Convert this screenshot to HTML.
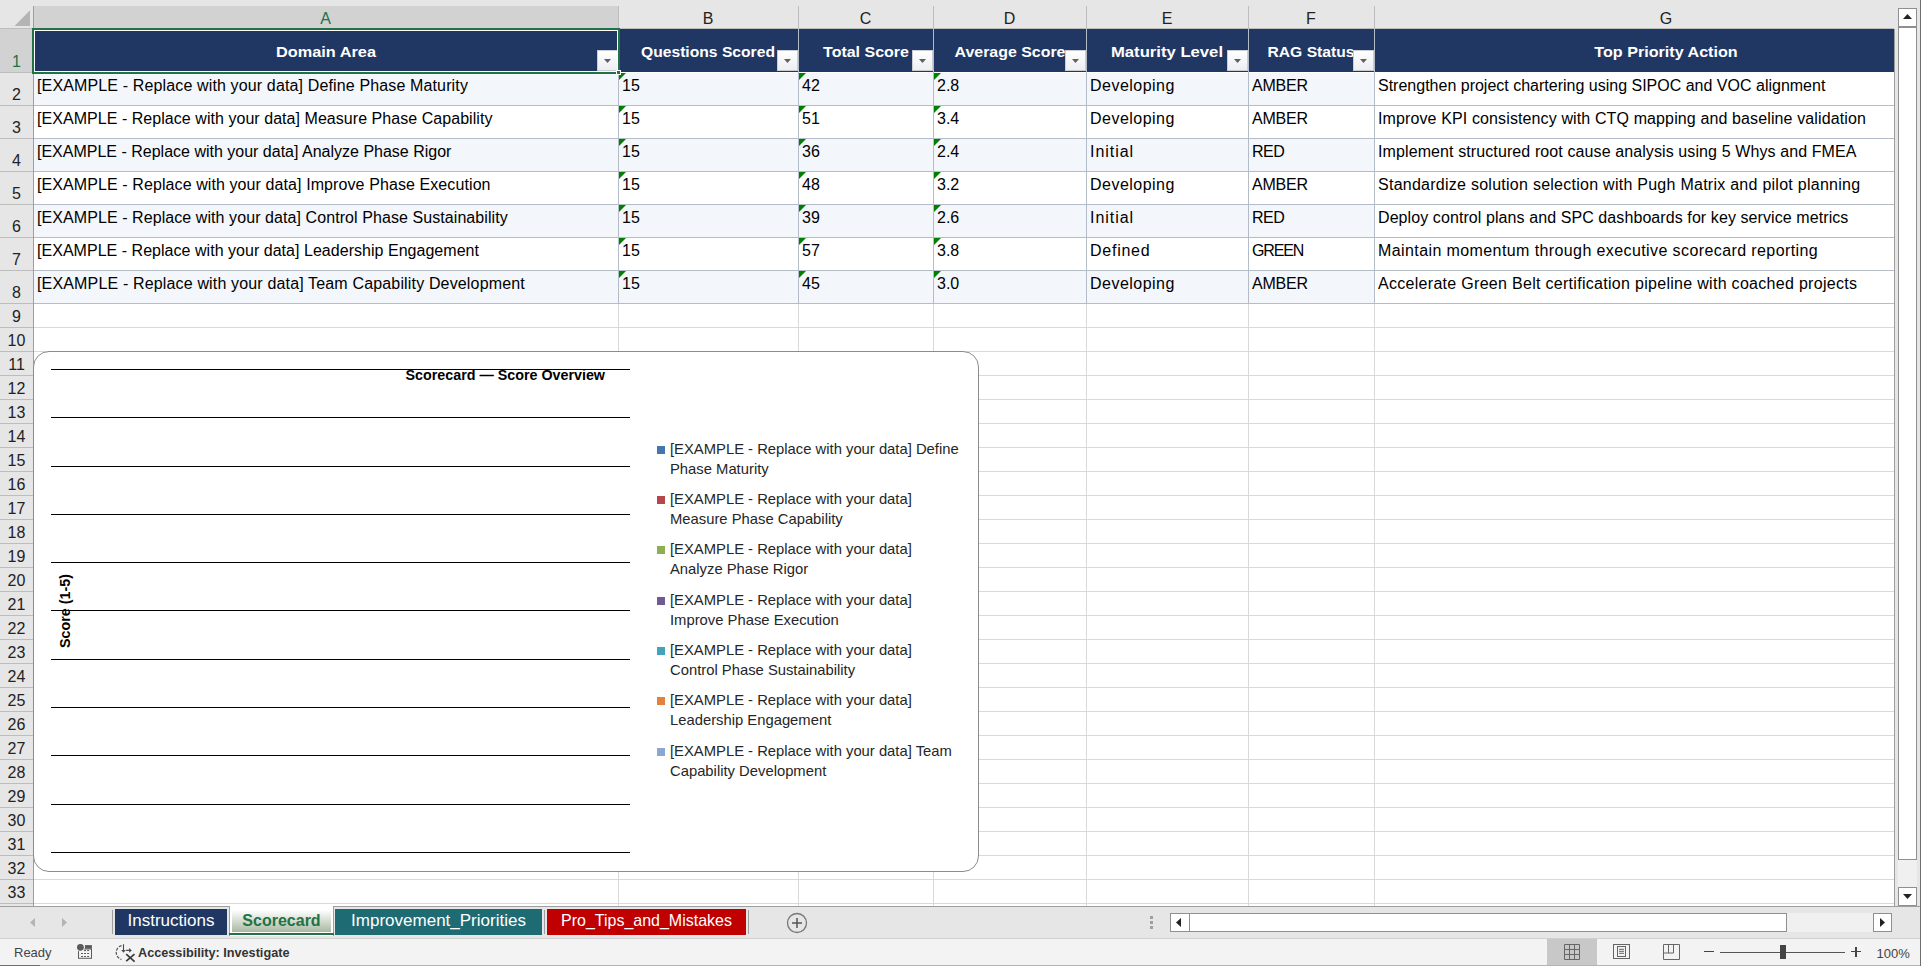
<!DOCTYPE html><html><head><meta charset="utf-8"><style>
*{box-sizing:border-box}
html,body{margin:0;padding:0}
body{width:1921px;height:966px;overflow:hidden;position:relative;background:#fff;font-family:"Liberation Sans",sans-serif}
.a{position:absolute}
.t{position:absolute;white-space:nowrap;line-height:20px}

</style></head><body>
<div class="a" style="left:0;top:0;width:1921px;height:29px;background:#e6e6e6"></div>
<div class="a" style="left:0;top:0;width:33px;height:906px;background:#e6e6e6"></div>
<svg class="a" style="left:0;top:0" width="33" height="29"><polygon points="14.5,26 30,26 30,10.3" fill="#b4b4b4"/></svg>
<div class="a" style="left:34px;top:6px;width:584px;height:23px;background:#d2d2d2"></div>
<div class="a" style="left:618px;top:6px;width:1px;height:23px;background:#bdbdbd"></div>
<div class="a" style="left:798px;top:6px;width:1px;height:23px;background:#bdbdbd"></div>
<div class="a" style="left:933px;top:6px;width:1px;height:23px;background:#bdbdbd"></div>
<div class="a" style="left:1086px;top:6px;width:1px;height:23px;background:#bdbdbd"></div>
<div class="a" style="left:1248px;top:6px;width:1px;height:23px;background:#bdbdbd"></div>
<div class="a" style="left:1374px;top:6px;width:1px;height:23px;background:#bdbdbd"></div>
<div class="a" style="left:33px;top:6px;width:1px;height:23px;background:#bdbdbd"></div>
<div class="a" style="left:0;top:28px;width:1894px;height:1px;background:#bdbdbd"></div>
<div class="t" style="left:295.5px;top:8.6px;width:60px;text-align:center;font-size:16px;color:#217346">A</div>
<div class="t" style="left:678.0px;top:8.6px;width:60px;text-align:center;font-size:16px;color:#222">B</div>
<div class="t" style="left:835.5px;top:8.6px;width:60px;text-align:center;font-size:16px;color:#222">C</div>
<div class="t" style="left:979.5px;top:8.6px;width:60px;text-align:center;font-size:16px;color:#222">D</div>
<div class="t" style="left:1137.0px;top:8.6px;width:60px;text-align:center;font-size:16px;color:#222">E</div>
<div class="t" style="left:1281.0px;top:8.6px;width:60px;text-align:center;font-size:16px;color:#222">F</div>
<div class="t" style="left:1636px;top:8.6px;width:60px;text-align:center;font-size:16px;color:#222">G</div>
<div class="a" style="left:0;top:29px;width:33px;height:43px;background:#d2d2d2"></div>
<div class="a" style="left:33px;top:6px;width:1px;height:900px;background:#9e9e9e"></div>
<div class="a" style="left:0;top:72px;width:33px;height:1px;background:#bdbdbd"></div>
<div class="t" style="left:0;top:52px;width:33px;text-align:center;font-size:16px;color:#217346">1</div>
<div class="a" style="left:0;top:105px;width:33px;height:1px;background:#bdbdbd"></div>
<div class="t" style="left:0;top:85px;width:33px;text-align:center;font-size:16px;color:#222">2</div>
<div class="a" style="left:0;top:138px;width:33px;height:1px;background:#bdbdbd"></div>
<div class="t" style="left:0;top:118px;width:33px;text-align:center;font-size:16px;color:#222">3</div>
<div class="a" style="left:0;top:171px;width:33px;height:1px;background:#bdbdbd"></div>
<div class="t" style="left:0;top:151px;width:33px;text-align:center;font-size:16px;color:#222">4</div>
<div class="a" style="left:0;top:204px;width:33px;height:1px;background:#bdbdbd"></div>
<div class="t" style="left:0;top:184px;width:33px;text-align:center;font-size:16px;color:#222">5</div>
<div class="a" style="left:0;top:237px;width:33px;height:1px;background:#bdbdbd"></div>
<div class="t" style="left:0;top:217px;width:33px;text-align:center;font-size:16px;color:#222">6</div>
<div class="a" style="left:0;top:270px;width:33px;height:1px;background:#bdbdbd"></div>
<div class="t" style="left:0;top:250px;width:33px;text-align:center;font-size:16px;color:#222">7</div>
<div class="a" style="left:0;top:303px;width:33px;height:1px;background:#bdbdbd"></div>
<div class="t" style="left:0;top:283px;width:33px;text-align:center;font-size:16px;color:#222">8</div>
<div class="a" style="left:0;top:327px;width:33px;height:1px;background:#bdbdbd"></div>
<div class="t" style="left:0;top:307px;width:33px;text-align:center;font-size:16px;color:#222">9</div>
<div class="a" style="left:0;top:351px;width:33px;height:1px;background:#bdbdbd"></div>
<div class="t" style="left:0;top:331px;width:33px;text-align:center;font-size:16px;color:#222">10</div>
<div class="a" style="left:0;top:375px;width:33px;height:1px;background:#bdbdbd"></div>
<div class="t" style="left:0;top:355px;width:33px;text-align:center;font-size:16px;color:#222">11</div>
<div class="a" style="left:0;top:399px;width:33px;height:1px;background:#bdbdbd"></div>
<div class="t" style="left:0;top:379px;width:33px;text-align:center;font-size:16px;color:#222">12</div>
<div class="a" style="left:0;top:423px;width:33px;height:1px;background:#bdbdbd"></div>
<div class="t" style="left:0;top:403px;width:33px;text-align:center;font-size:16px;color:#222">13</div>
<div class="a" style="left:0;top:447px;width:33px;height:1px;background:#bdbdbd"></div>
<div class="t" style="left:0;top:427px;width:33px;text-align:center;font-size:16px;color:#222">14</div>
<div class="a" style="left:0;top:471px;width:33px;height:1px;background:#bdbdbd"></div>
<div class="t" style="left:0;top:451px;width:33px;text-align:center;font-size:16px;color:#222">15</div>
<div class="a" style="left:0;top:495px;width:33px;height:1px;background:#bdbdbd"></div>
<div class="t" style="left:0;top:475px;width:33px;text-align:center;font-size:16px;color:#222">16</div>
<div class="a" style="left:0;top:519px;width:33px;height:1px;background:#bdbdbd"></div>
<div class="t" style="left:0;top:499px;width:33px;text-align:center;font-size:16px;color:#222">17</div>
<div class="a" style="left:0;top:543px;width:33px;height:1px;background:#bdbdbd"></div>
<div class="t" style="left:0;top:523px;width:33px;text-align:center;font-size:16px;color:#222">18</div>
<div class="a" style="left:0;top:567px;width:33px;height:1px;background:#bdbdbd"></div>
<div class="t" style="left:0;top:547px;width:33px;text-align:center;font-size:16px;color:#222">19</div>
<div class="a" style="left:0;top:591px;width:33px;height:1px;background:#bdbdbd"></div>
<div class="t" style="left:0;top:571px;width:33px;text-align:center;font-size:16px;color:#222">20</div>
<div class="a" style="left:0;top:615px;width:33px;height:1px;background:#bdbdbd"></div>
<div class="t" style="left:0;top:595px;width:33px;text-align:center;font-size:16px;color:#222">21</div>
<div class="a" style="left:0;top:639px;width:33px;height:1px;background:#bdbdbd"></div>
<div class="t" style="left:0;top:619px;width:33px;text-align:center;font-size:16px;color:#222">22</div>
<div class="a" style="left:0;top:663px;width:33px;height:1px;background:#bdbdbd"></div>
<div class="t" style="left:0;top:643px;width:33px;text-align:center;font-size:16px;color:#222">23</div>
<div class="a" style="left:0;top:687px;width:33px;height:1px;background:#bdbdbd"></div>
<div class="t" style="left:0;top:667px;width:33px;text-align:center;font-size:16px;color:#222">24</div>
<div class="a" style="left:0;top:711px;width:33px;height:1px;background:#bdbdbd"></div>
<div class="t" style="left:0;top:691px;width:33px;text-align:center;font-size:16px;color:#222">25</div>
<div class="a" style="left:0;top:735px;width:33px;height:1px;background:#bdbdbd"></div>
<div class="t" style="left:0;top:715px;width:33px;text-align:center;font-size:16px;color:#222">26</div>
<div class="a" style="left:0;top:759px;width:33px;height:1px;background:#bdbdbd"></div>
<div class="t" style="left:0;top:739px;width:33px;text-align:center;font-size:16px;color:#222">27</div>
<div class="a" style="left:0;top:783px;width:33px;height:1px;background:#bdbdbd"></div>
<div class="t" style="left:0;top:763px;width:33px;text-align:center;font-size:16px;color:#222">28</div>
<div class="a" style="left:0;top:807px;width:33px;height:1px;background:#bdbdbd"></div>
<div class="t" style="left:0;top:787px;width:33px;text-align:center;font-size:16px;color:#222">29</div>
<div class="a" style="left:0;top:831px;width:33px;height:1px;background:#bdbdbd"></div>
<div class="t" style="left:0;top:811px;width:33px;text-align:center;font-size:16px;color:#222">30</div>
<div class="a" style="left:0;top:855px;width:33px;height:1px;background:#bdbdbd"></div>
<div class="t" style="left:0;top:835px;width:33px;text-align:center;font-size:16px;color:#222">31</div>
<div class="a" style="left:0;top:879px;width:33px;height:1px;background:#bdbdbd"></div>
<div class="t" style="left:0;top:859px;width:33px;text-align:center;font-size:16px;color:#222">32</div>
<div class="a" style="left:0;top:903px;width:33px;height:1px;background:#bdbdbd"></div>
<div class="t" style="left:0;top:883px;width:33px;text-align:center;font-size:16px;color:#222">33</div>
<div class="a" style="left:34px;top:327px;width:1860px;height:1px;background:#d9d9d9"></div>
<div class="a" style="left:34px;top:351px;width:1860px;height:1px;background:#d9d9d9"></div>
<div class="a" style="left:34px;top:375px;width:1860px;height:1px;background:#d9d9d9"></div>
<div class="a" style="left:34px;top:399px;width:1860px;height:1px;background:#d9d9d9"></div>
<div class="a" style="left:34px;top:423px;width:1860px;height:1px;background:#d9d9d9"></div>
<div class="a" style="left:34px;top:447px;width:1860px;height:1px;background:#d9d9d9"></div>
<div class="a" style="left:34px;top:471px;width:1860px;height:1px;background:#d9d9d9"></div>
<div class="a" style="left:34px;top:495px;width:1860px;height:1px;background:#d9d9d9"></div>
<div class="a" style="left:34px;top:519px;width:1860px;height:1px;background:#d9d9d9"></div>
<div class="a" style="left:34px;top:543px;width:1860px;height:1px;background:#d9d9d9"></div>
<div class="a" style="left:34px;top:567px;width:1860px;height:1px;background:#d9d9d9"></div>
<div class="a" style="left:34px;top:591px;width:1860px;height:1px;background:#d9d9d9"></div>
<div class="a" style="left:34px;top:615px;width:1860px;height:1px;background:#d9d9d9"></div>
<div class="a" style="left:34px;top:639px;width:1860px;height:1px;background:#d9d9d9"></div>
<div class="a" style="left:34px;top:663px;width:1860px;height:1px;background:#d9d9d9"></div>
<div class="a" style="left:34px;top:687px;width:1860px;height:1px;background:#d9d9d9"></div>
<div class="a" style="left:34px;top:711px;width:1860px;height:1px;background:#d9d9d9"></div>
<div class="a" style="left:34px;top:735px;width:1860px;height:1px;background:#d9d9d9"></div>
<div class="a" style="left:34px;top:759px;width:1860px;height:1px;background:#d9d9d9"></div>
<div class="a" style="left:34px;top:783px;width:1860px;height:1px;background:#d9d9d9"></div>
<div class="a" style="left:34px;top:807px;width:1860px;height:1px;background:#d9d9d9"></div>
<div class="a" style="left:34px;top:831px;width:1860px;height:1px;background:#d9d9d9"></div>
<div class="a" style="left:34px;top:855px;width:1860px;height:1px;background:#d9d9d9"></div>
<div class="a" style="left:34px;top:879px;width:1860px;height:1px;background:#d9d9d9"></div>
<div class="a" style="left:34px;top:903px;width:1860px;height:1px;background:#d9d9d9"></div>
<div class="a" style="left:618px;top:303px;width:1px;height:603px;background:#d9d9d9"></div>
<div class="a" style="left:798px;top:303px;width:1px;height:603px;background:#d9d9d9"></div>
<div class="a" style="left:933px;top:303px;width:1px;height:603px;background:#d9d9d9"></div>
<div class="a" style="left:1086px;top:303px;width:1px;height:603px;background:#d9d9d9"></div>
<div class="a" style="left:1248px;top:303px;width:1px;height:603px;background:#d9d9d9"></div>
<div class="a" style="left:1374px;top:303px;width:1px;height:603px;background:#d9d9d9"></div>
<div class="a" style="left:1894px;top:303px;width:1px;height:603px;background:#d9d9d9"></div>
<div class="a" style="left:34px;top:29px;width:1860px;height:43px;background:#203764"></div>
<div class="t" style="left:175.5px;top:41.5px;width:300px;text-align:center;font-size:15.5px;font-weight:bold;color:#fff;transform:scaleX(1.052)">Domain Area</div>
<div class="a" style="left:597px;top:50px;width:21px;height:21px;border:1px solid #c9ccd2;background:linear-gradient(#fff,#eceef2)"></div>
<svg class="a" style="left:604px;top:59px" width="7" height="4"><polygon points="0,0 7,0 3.5,4" fill="#606060"/></svg>
<div class="t" style="left:558.0px;top:41.5px;width:300px;text-align:center;font-size:15.5px;font-weight:bold;color:#fff;transform:scaleX(1.01)">Questions Scored</div>
<div class="a" style="left:777px;top:50px;width:21px;height:21px;border:1px solid #c9ccd2;background:linear-gradient(#fff,#eceef2)"></div>
<svg class="a" style="left:784px;top:59px" width="7" height="4"><polygon points="0,0 7,0 3.5,4" fill="#606060"/></svg>
<div class="t" style="left:715.5px;top:41.5px;width:300px;text-align:center;font-size:15.5px;font-weight:bold;color:#fff;transform:scaleX(1.03)">Total Score</div>
<div class="a" style="left:912px;top:50px;width:21px;height:21px;border:1px solid #c9ccd2;background:linear-gradient(#fff,#eceef2)"></div>
<svg class="a" style="left:919px;top:59px" width="7" height="4"><polygon points="0,0 7,0 3.5,4" fill="#606060"/></svg>
<div class="t" style="left:859.5px;top:41.5px;width:300px;text-align:center;font-size:15.5px;font-weight:bold;color:#fff;transform:scaleX(1.027)">Average Score</div>
<div class="a" style="left:1065px;top:50px;width:21px;height:21px;border:1px solid #c9ccd2;background:linear-gradient(#fff,#eceef2)"></div>
<svg class="a" style="left:1072px;top:59px" width="7" height="4"><polygon points="0,0 7,0 3.5,4" fill="#606060"/></svg>
<div class="t" style="left:1017.0px;top:41.5px;width:300px;text-align:center;font-size:15.5px;font-weight:bold;color:#fff;transform:scaleX(1.075)">Maturity Level</div>
<div class="a" style="left:1227px;top:50px;width:21px;height:21px;border:1px solid #c9ccd2;background:linear-gradient(#fff,#eceef2)"></div>
<svg class="a" style="left:1234px;top:59px" width="7" height="4"><polygon points="0,0 7,0 3.5,4" fill="#606060"/></svg>
<div class="t" style="left:1161.0px;top:41.5px;width:300px;text-align:center;font-size:15.5px;font-weight:bold;color:#fff;transform:scaleX(1.01)">RAG Status</div>
<div class="a" style="left:1353px;top:50px;width:21px;height:21px;border:1px solid #c9ccd2;background:linear-gradient(#fff,#eceef2)"></div>
<svg class="a" style="left:1360px;top:59px" width="7" height="4"><polygon points="0,0 7,0 3.5,4" fill="#606060"/></svg>
<div class="t" style="left:1516px;top:41.5px;width:300px;text-align:center;font-size:15.5px;font-weight:bold;color:#fff;transform:scaleX(1.04)">Top Priority Action</div>
<div class="a" style="left:34px;top:73px;width:1340px;height:32px;background:#f3f6fb"></div>
<div class="a" style="left:34px;top:139px;width:1340px;height:32px;background:#f3f6fb"></div>
<div class="a" style="left:34px;top:205px;width:1340px;height:32px;background:#f3f6fb"></div>
<div class="a" style="left:34px;top:271px;width:1340px;height:32px;background:#f3f6fb"></div>
<div class="a" style="left:618px;top:29px;width:1px;height:274px;background:#b4bcc8"></div>
<div class="a" style="left:798px;top:29px;width:1px;height:274px;background:#b4bcc8"></div>
<div class="a" style="left:933px;top:29px;width:1px;height:274px;background:#b4bcc8"></div>
<div class="a" style="left:1086px;top:29px;width:1px;height:274px;background:#b4bcc8"></div>
<div class="a" style="left:1248px;top:29px;width:1px;height:274px;background:#b4bcc8"></div>
<div class="a" style="left:1374px;top:29px;width:1px;height:274px;background:#b4bcc8"></div>
<div class="a" style="left:1894px;top:29px;width:1px;height:877px;background:#9e9e9e"></div>
<div class="a" style="left:34px;top:105px;width:1860px;height:1px;background:#b4bcc8"></div>
<div class="t" style="left:37.0px;top:76.3px;font-size:16px;color:#000;letter-spacing:0.138px">[EXAMPLE - Replace with your data] Define Phase Maturity</div>
<div class="t" style="left:622.0px;top:76.3px;font-size:16px;color:#000">15</div>
<svg class="a" style="left:619px;top:73px" width="7" height="7"><polygon points="0,0 7,0 0,7" fill="#008000"/></svg>
<div class="t" style="left:802.0px;top:76.3px;font-size:16px;color:#000">42</div>
<svg class="a" style="left:799px;top:73px" width="7" height="7"><polygon points="0,0 7,0 0,7" fill="#008000"/></svg>
<div class="t" style="left:937.0px;top:76.3px;font-size:16px;color:#000">2.8</div>
<svg class="a" style="left:934px;top:73px" width="7" height="7"><polygon points="0,0 7,0 0,7" fill="#008000"/></svg>
<div class="t" style="left:1090.0px;top:76.3px;font-size:16px;color:#000;letter-spacing:0.478px">Developing</div>
<div class="t" style="left:1252.0px;top:76.3px;font-size:16px;color:#000;letter-spacing:-0.225px">AMBER</div>
<div class="t" style="left:1378.0px;top:76.3px;font-size:16px;color:#000">Strengthen project chartering using SIPOC and VOC alignment</div>
<div class="a" style="left:34px;top:138px;width:1860px;height:1px;background:#b4bcc8"></div>
<div class="t" style="left:37.0px;top:109.3px;font-size:16px;color:#000;letter-spacing:0.047px">[EXAMPLE - Replace with your data] Measure Phase Capability</div>
<div class="t" style="left:622.0px;top:109.3px;font-size:16px;color:#000">15</div>
<svg class="a" style="left:619px;top:106px" width="7" height="7"><polygon points="0,0 7,0 0,7" fill="#008000"/></svg>
<div class="t" style="left:802.0px;top:109.3px;font-size:16px;color:#000">51</div>
<svg class="a" style="left:799px;top:106px" width="7" height="7"><polygon points="0,0 7,0 0,7" fill="#008000"/></svg>
<div class="t" style="left:937.0px;top:109.3px;font-size:16px;color:#000">3.4</div>
<svg class="a" style="left:934px;top:106px" width="7" height="7"><polygon points="0,0 7,0 0,7" fill="#008000"/></svg>
<div class="t" style="left:1090.0px;top:109.3px;font-size:16px;color:#000;letter-spacing:0.478px">Developing</div>
<div class="t" style="left:1252.0px;top:109.3px;font-size:16px;color:#000;letter-spacing:-0.225px">AMBER</div>
<div class="t" style="left:1378.0px;top:109.3px;font-size:16px;color:#000;letter-spacing:0.121px">Improve KPI consistency with CTQ mapping and baseline validation</div>
<div class="a" style="left:34px;top:171px;width:1860px;height:1px;background:#b4bcc8"></div>
<div class="t" style="left:37.0px;top:142.3px;font-size:16px;color:#000">[EXAMPLE - Replace with your data] Analyze Phase Rigor</div>
<div class="t" style="left:622.0px;top:142.3px;font-size:16px;color:#000">15</div>
<svg class="a" style="left:619px;top:139px" width="7" height="7"><polygon points="0,0 7,0 0,7" fill="#008000"/></svg>
<div class="t" style="left:802.0px;top:142.3px;font-size:16px;color:#000">36</div>
<svg class="a" style="left:799px;top:139px" width="7" height="7"><polygon points="0,0 7,0 0,7" fill="#008000"/></svg>
<div class="t" style="left:937.0px;top:142.3px;font-size:16px;color:#000">2.4</div>
<svg class="a" style="left:934px;top:139px" width="7" height="7"><polygon points="0,0 7,0 0,7" fill="#008000"/></svg>
<div class="t" style="left:1090.0px;top:142.3px;font-size:16px;color:#000;letter-spacing:0.967px">Initial</div>
<div class="t" style="left:1252.0px;top:142.3px;font-size:16px;color:#000;letter-spacing:-0.500px">RED</div>
<div class="t" style="left:1378.0px;top:142.3px;font-size:16px;color:#000;letter-spacing:0.103px">Implement structured root cause analysis using 5 Whys and FMEA</div>
<div class="a" style="left:34px;top:204px;width:1860px;height:1px;background:#b4bcc8"></div>
<div class="t" style="left:37.0px;top:175.3px;font-size:16px;color:#000;letter-spacing:0.093px">[EXAMPLE - Replace with your data] Improve Phase Execution</div>
<div class="t" style="left:622.0px;top:175.3px;font-size:16px;color:#000">15</div>
<svg class="a" style="left:619px;top:172px" width="7" height="7"><polygon points="0,0 7,0 0,7" fill="#008000"/></svg>
<div class="t" style="left:802.0px;top:175.3px;font-size:16px;color:#000">48</div>
<svg class="a" style="left:799px;top:172px" width="7" height="7"><polygon points="0,0 7,0 0,7" fill="#008000"/></svg>
<div class="t" style="left:937.0px;top:175.3px;font-size:16px;color:#000">3.2</div>
<svg class="a" style="left:934px;top:172px" width="7" height="7"><polygon points="0,0 7,0 0,7" fill="#008000"/></svg>
<div class="t" style="left:1090.0px;top:175.3px;font-size:16px;color:#000;letter-spacing:0.478px">Developing</div>
<div class="t" style="left:1252.0px;top:175.3px;font-size:16px;color:#000;letter-spacing:-0.225px">AMBER</div>
<div class="t" style="left:1378.0px;top:175.3px;font-size:16px;color:#000;letter-spacing:0.260px">Standardize solution selection with Pugh Matrix and pilot planning</div>
<div class="a" style="left:34px;top:237px;width:1860px;height:1px;background:#b4bcc8"></div>
<div class="t" style="left:37.0px;top:208.3px;font-size:16px;color:#000;letter-spacing:0.076px">[EXAMPLE - Replace with your data] Control Phase Sustainability</div>
<div class="t" style="left:622.0px;top:208.3px;font-size:16px;color:#000">15</div>
<svg class="a" style="left:619px;top:205px" width="7" height="7"><polygon points="0,0 7,0 0,7" fill="#008000"/></svg>
<div class="t" style="left:802.0px;top:208.3px;font-size:16px;color:#000">39</div>
<svg class="a" style="left:799px;top:205px" width="7" height="7"><polygon points="0,0 7,0 0,7" fill="#008000"/></svg>
<div class="t" style="left:937.0px;top:208.3px;font-size:16px;color:#000">2.6</div>
<svg class="a" style="left:934px;top:205px" width="7" height="7"><polygon points="0,0 7,0 0,7" fill="#008000"/></svg>
<div class="t" style="left:1090.0px;top:208.3px;font-size:16px;color:#000;letter-spacing:0.967px">Initial</div>
<div class="t" style="left:1252.0px;top:208.3px;font-size:16px;color:#000;letter-spacing:-0.500px">RED</div>
<div class="t" style="left:1378.0px;top:208.3px;font-size:16px;color:#000;letter-spacing:0.085px">Deploy control plans and SPC dashboards for key service metrics</div>
<div class="a" style="left:34px;top:270px;width:1860px;height:1px;background:#b4bcc8"></div>
<div class="t" style="left:37.0px;top:241.3px;font-size:16px;color:#000;letter-spacing:0.031px">[EXAMPLE - Replace with your data] Leadership Engagement</div>
<div class="t" style="left:622.0px;top:241.3px;font-size:16px;color:#000">15</div>
<svg class="a" style="left:619px;top:238px" width="7" height="7"><polygon points="0,0 7,0 0,7" fill="#008000"/></svg>
<div class="t" style="left:802.0px;top:241.3px;font-size:16px;color:#000">57</div>
<svg class="a" style="left:799px;top:238px" width="7" height="7"><polygon points="0,0 7,0 0,7" fill="#008000"/></svg>
<div class="t" style="left:937.0px;top:241.3px;font-size:16px;color:#000">3.8</div>
<svg class="a" style="left:934px;top:238px" width="7" height="7"><polygon points="0,0 7,0 0,7" fill="#008000"/></svg>
<div class="t" style="left:1090.0px;top:241.3px;font-size:16px;color:#000;letter-spacing:0.750px">Defined</div>
<div class="t" style="left:1252.0px;top:241.3px;font-size:16px;color:#000;letter-spacing:-1.125px">GREEN</div>
<div class="t" style="left:1378.0px;top:241.3px;font-size:16px;color:#000;letter-spacing:0.402px">Maintain momentum through executive scorecard reporting</div>
<div class="a" style="left:34px;top:303px;width:1860px;height:1px;background:#b4bcc8"></div>
<div class="t" style="left:37.0px;top:274.3px;font-size:16px;color:#000;letter-spacing:0.157px">[EXAMPLE - Replace with your data] Team Capability Development</div>
<div class="t" style="left:622.0px;top:274.3px;font-size:16px;color:#000">15</div>
<svg class="a" style="left:619px;top:271px" width="7" height="7"><polygon points="0,0 7,0 0,7" fill="#008000"/></svg>
<div class="t" style="left:802.0px;top:274.3px;font-size:16px;color:#000">45</div>
<svg class="a" style="left:799px;top:271px" width="7" height="7"><polygon points="0,0 7,0 0,7" fill="#008000"/></svg>
<div class="t" style="left:937.0px;top:274.3px;font-size:16px;color:#000">3.0</div>
<svg class="a" style="left:934px;top:271px" width="7" height="7"><polygon points="0,0 7,0 0,7" fill="#008000"/></svg>
<div class="t" style="left:1090.0px;top:274.3px;font-size:16px;color:#000;letter-spacing:0.478px">Developing</div>
<div class="t" style="left:1252.0px;top:274.3px;font-size:16px;color:#000;letter-spacing:-0.225px">AMBER</div>
<div class="t" style="left:1378.0px;top:274.3px;font-size:16px;color:#000;letter-spacing:0.295px">Accelerate Green Belt certification pipeline with coached projects</div>
<div class="a" style="left:32px;top:28px;width:588px;height:46px;border:2px solid #217346"></div>
<div class="a" style="left:34px;top:30px;width:584px;height:42px;border:1px solid #fff"></div>
<div class="a" style="left:616px;top:70px;width:5px;height:5px;background:#217346;border:1px solid #fff"></div>
<div class="a" style="left:33px;top:351px;width:946px;height:521px;border:1px solid #8c8c8c;border-radius:16px;background:#fff"></div>
<div class="a" style="left:51px;top:369px;width:579px;height:1px;background:#000"></div>
<div class="a" style="left:51px;top:417px;width:579px;height:1px;background:#000"></div>
<div class="a" style="left:51px;top:466px;width:579px;height:1px;background:#000"></div>
<div class="a" style="left:51px;top:514px;width:579px;height:1px;background:#000"></div>
<div class="a" style="left:51px;top:562px;width:579px;height:1px;background:#000"></div>
<div class="a" style="left:51px;top:610px;width:579px;height:1px;background:#000"></div>
<div class="a" style="left:51px;top:659px;width:579px;height:1px;background:#000"></div>
<div class="a" style="left:51px;top:707px;width:579px;height:1px;background:#000"></div>
<div class="a" style="left:51px;top:755px;width:579px;height:1px;background:#000"></div>
<div class="a" style="left:51px;top:804px;width:579px;height:1px;background:#000"></div>
<div class="a" style="left:51px;top:852px;width:579px;height:1px;background:#000"></div>
<div class="t" style="left:405.5px;top:365px;font-size:14.3px;font-weight:bold;color:#000">Scorecard — Score Overview</div>
<div class="t" style="left:28px;top:600.5px;width:74px;height:20px;font-size:14.3px;font-weight:bold;color:#000;transform:rotate(-90deg);text-align:center">Score (1-5)</div>
<div class="a" style="left:657px;top:446.0px;width:8px;height:8px;background:#4675b0"></div>
<div class="t" style="left:670px;top:439.0px;font-size:14.8px;color:#262626">[EXAMPLE - Replace with your data] Define</div>
<div class="t" style="left:670px;top:459.2px;font-size:14.8px;color:#262626">Phase Maturity</div>
<div class="a" style="left:657px;top:496.0px;width:8px;height:8px;background:#b5474a"></div>
<div class="t" style="left:670px;top:489.0px;font-size:14.8px;color:#262626">[EXAMPLE - Replace with your data]</div>
<div class="t" style="left:670px;top:509.2px;font-size:14.8px;color:#262626">Measure Phase Capability</div>
<div class="a" style="left:657px;top:546.0px;width:8px;height:8px;background:#8fae52"></div>
<div class="t" style="left:670px;top:539.0px;font-size:14.8px;color:#262626">[EXAMPLE - Replace with your data]</div>
<div class="t" style="left:670px;top:559.2px;font-size:14.8px;color:#262626">Analyze Phase Rigor</div>
<div class="a" style="left:657px;top:597.0px;width:8px;height:8px;background:#725a96"></div>
<div class="t" style="left:670px;top:590.0px;font-size:14.8px;color:#262626">[EXAMPLE - Replace with your data]</div>
<div class="t" style="left:670px;top:610.2px;font-size:14.8px;color:#262626">Improve Phase Execution</div>
<div class="a" style="left:657px;top:647.0px;width:8px;height:8px;background:#44a2bb"></div>
<div class="t" style="left:670px;top:640.0px;font-size:14.8px;color:#262626">[EXAMPLE - Replace with your data]</div>
<div class="t" style="left:670px;top:660.2px;font-size:14.8px;color:#262626">Control Phase Sustainability</div>
<div class="a" style="left:657px;top:697.0px;width:8px;height:8px;background:#e3823d"></div>
<div class="t" style="left:670px;top:690.0px;font-size:14.8px;color:#262626">[EXAMPLE - Replace with your data]</div>
<div class="t" style="left:670px;top:710.2px;font-size:14.8px;color:#262626">Leadership Engagement</div>
<div class="a" style="left:657px;top:748.0px;width:8px;height:8px;background:#8aa7d2"></div>
<div class="t" style="left:670px;top:741.0px;font-size:14.8px;color:#262626">[EXAMPLE - Replace with your data] Team</div>
<div class="t" style="left:670px;top:761.2px;font-size:14.8px;color:#262626">Capability Development</div>
<div class="a" style="left:1895px;top:0;width:25px;height:906px;background:#e6e6e6"></div>
<div class="a" style="left:1898px;top:8px;width:19px;height:19px;border:1px solid #8f8f8f;background:#fff"></div>
<svg class="a" style="left:1903px;top:14px" width="9" height="5"><polygon points="0,5 9,5 4.5,0" fill="#222"/></svg>
<div class="a" style="left:1898px;top:27px;width:19px;height:833px;border:1px solid #8f8f8f;background:#fff"></div>
<div class="a" style="left:1898px;top:860px;width:19px;height:27px;background:#f0f0f0"></div>
<div class="a" style="left:1898px;top:887px;width:19px;height:19px;border:1px solid #8f8f8f;background:#fff"></div>
<svg class="a" style="left:1903px;top:894px" width="9" height="5"><polygon points="0,0 9,0 4.5,5" fill="#222"/></svg>
<div class="a" style="left:0;top:906px;width:1920px;height:1px;background:#9e9e9e"></div>
<div class="a" style="left:0;top:907px;width:1920px;height:31px;background:#e6e6e6"></div>
<div class="a" style="left:0;top:938px;width:1920px;height:1px;background:#d0d0d0"></div>
<svg class="a" style="left:30px;top:918px" width="6" height="10"><polygon points="5,0 5,9 0,4.5" fill="#b4b4b4"/></svg>
<svg class="a" style="left:62px;top:918px" width="6" height="10"><polygon points="0,0 0,9 5,4.5" fill="#b4b4b4"/></svg>
<div class="a" style="left:112px;top:910px;width:1px;height:24px;background:#9e9e9e"></div>
<div class="a" style="left:115px;top:909px;width:112px;height:26px;background:#203764"></div>
<div class="t" style="left:115px;top:908px;width:112px;height:26px;color:#fff;font-size:17px;text-align:center;line-height:26px;transform:scaleX(1)">Instructions</div>
<div class="a" style="left:335px;top:909px;width:207px;height:26px;background:#1e6b73"></div>
<div class="t" style="left:335px;top:908px;width:207px;height:26px;color:#fff;font-size:17px;text-align:center;line-height:26px;transform:scaleX(1)">Improvement_Priorities</div>
<div class="a" style="left:547px;top:909px;width:199px;height:26px;background:#c00000"></div>
<div class="t" style="left:547px;top:908px;width:199px;height:26px;color:#fff;font-size:17px;text-align:center;line-height:26px;transform:scaleX(0.94)">Pro_Tips_and_Mistakes</div>
<div class="a" style="left:229px;top:906px;width:105px;height:30px;background:#fff;border-left:1px solid #9e9e9e;border-right:1px solid #9e9e9e"></div>
<div class="a" style="left:232px;top:910px;width:99px;height:22px;background:linear-gradient(#ffffff,#aab8a2)"></div>
<div class="a" style="left:229px;top:933px;width:105px;height:2px;background:#217346"></div>
<div class="t" style="left:229px;top:910.8px;width:105px;text-align:center;font-size:16px;font-weight:bold;color:#217346">Scorecard</div>
<div class="a" style="left:544px;top:910px;width:1px;height:24px;background:#9e9e9e"></div>
<div class="a" style="left:748px;top:910px;width:1px;height:24px;background:#9e9e9e"></div>
<svg class="a" style="left:786px;top:912px" width="22" height="22"><circle cx="11" cy="11" r="9.5" fill="none" stroke="#777" stroke-width="1.3"/><path d="M11 6v10M6 11h10" stroke="#555" stroke-width="1.5"/></svg>
<div class="a" style="left:1150px;top:916px;width:3px;height:3px;background:#a0a0a0"></div>
<div class="a" style="left:1150px;top:921px;width:3px;height:3px;background:#a0a0a0"></div>
<div class="a" style="left:1150px;top:926px;width:3px;height:3px;background:#a0a0a0"></div>
<div class="a" style="left:1170px;top:913px;width:722px;height:19px;background:#f0f0f0"></div>
<div class="a" style="left:1170px;top:913px;width:20px;height:19px;border:1px solid #8f8f8f;background:#fff"></div>
<svg class="a" style="left:1176px;top:918px" width="5" height="9"><polygon points="5,0 5,9 0,4.5" fill="#222"/></svg>
<div class="a" style="left:1189px;top:913px;width:598px;height:19px;border:1px solid #8f8f8f;background:#fff"></div>
<div class="a" style="left:1873px;top:913px;width:19px;height:19px;border:1px solid #8f8f8f;background:#fff"></div>
<svg class="a" style="left:1880px;top:918px" width="5" height="9"><polygon points="0,0 0,9 5,4.5" fill="#222"/></svg>
<div class="a" style="left:0;top:939px;width:1920px;height:27px;background:#f3f3f3"></div>
<div class="t" style="left:14px;top:943px;font-size:13px;color:#444">Ready</div>
<svg class="a" style="left:76px;top:943px" width="18" height="18"><rect x="2.5" y="6" width="13" height="9.3" fill="none" stroke="#5a5a5a" stroke-width="1"/><rect x="8.9" y="2.1" width="7" height="3.6" fill="#5a5a5a"/><path d="M8 7.6h2M11.1 7.6h2M5 10.5h2M8 10.5h2M11.1 10.5h2M5 13.5h2M8 13.5h2M11.1 13.5h2" stroke="#5a5a5a" stroke-width="1"/><circle cx="4.4" cy="4.3" r="4.2" fill="#f3f3f3"/><circle cx="4.4" cy="4.3" r="3.4" fill="#5a5a5a"/></svg>
<svg class="a" style="left:114px;top:943px" width="24" height="21"><path d="M7.54 2.55 A7.2 7.2 0 0 0 7.54 16.45" fill="none" stroke="#555" stroke-width="1.2" stroke-dasharray="3 1.3"/><path d="M9.5 1.2v6.5M12.1 7.4h3.5" stroke="#4a4a4a" stroke-width="1.1"/><polygon points="7.2,7.1 11.8,7.1 9.5,9.8" fill="#4a4a4a"/><polygon points="15.1,5.1 15.1,9.7 17.9,7.4" fill="#4a4a4a"/><path d="M12.2 11.2L20.6 18.6M12.2 18.2L20.5 11.2" stroke="#3a3a3a" stroke-width="1.7"/></svg>
<div class="t" style="left:138px;top:942.7px;font-size:13px;font-weight:bold;color:#333;transform:scaleX(0.975);transform-origin:0 0">Accessibility: Investigate</div>
<div class="a" style="left:1547px;top:939px;width:50px;height:27px;background:#c8c8c8"></div>
<svg class="a" style="left:1564px;top:944px" width="16" height="16"><path d="M0.5 0.5h15v15h-15zM5.5 0.5v15M10.5 0.5v15M0.5 5.5h15M0.5 10.5h15" fill="none" stroke="#666" stroke-width="1"/></svg>
<svg class="a" style="left:1613px;top:944px" width="18" height="16"><rect x="0.5" y="0.5" width="16" height="14" fill="none" stroke="#666"/><rect x="4.5" y="2.5" width="8" height="10" fill="none" stroke="#666"/><path d="M6 5.3h5M6 7.3h5M6 9.3h5" stroke="#666"/></svg>
<svg class="a" style="left:1663px;top:944px" width="18" height="17"><path d="M0.5 0.5h16v15h-16zM0.5 9h10V0.5M5.5 0.5v8.5" fill="none" stroke="#666"/></svg>
<div class="a" style="left:1704px;top:951px;width:10px;height:1.3px;background:#444"></div>
<div class="a" style="left:1720px;top:951.5px;width:125px;height:1px;background:#555"></div>
<div class="a" style="left:1780px;top:945px;width:6px;height:14px;background:#444"></div>
<div class="a" style="left:1851px;top:951px;width:10px;height:1.3px;background:#444"></div>
<div class="a" style="left:1855.3px;top:946.5px;width:1.3px;height:10px;background:#444"></div>
<div class="t" style="left:1876.5px;top:943.5px;font-size:13px;color:#444">100%</div>
<div class="a" style="left:0;top:965px;width:1920px;height:1px;background:#b4b4b4"></div><div class="a" style="left:0;top:965px;width:40px;height:1px;background:#707070"></div>
<div class="a" style="left:1920px;top:0;width:1px;height:966px;background:#6e6e6e"></div>
</body></html>
